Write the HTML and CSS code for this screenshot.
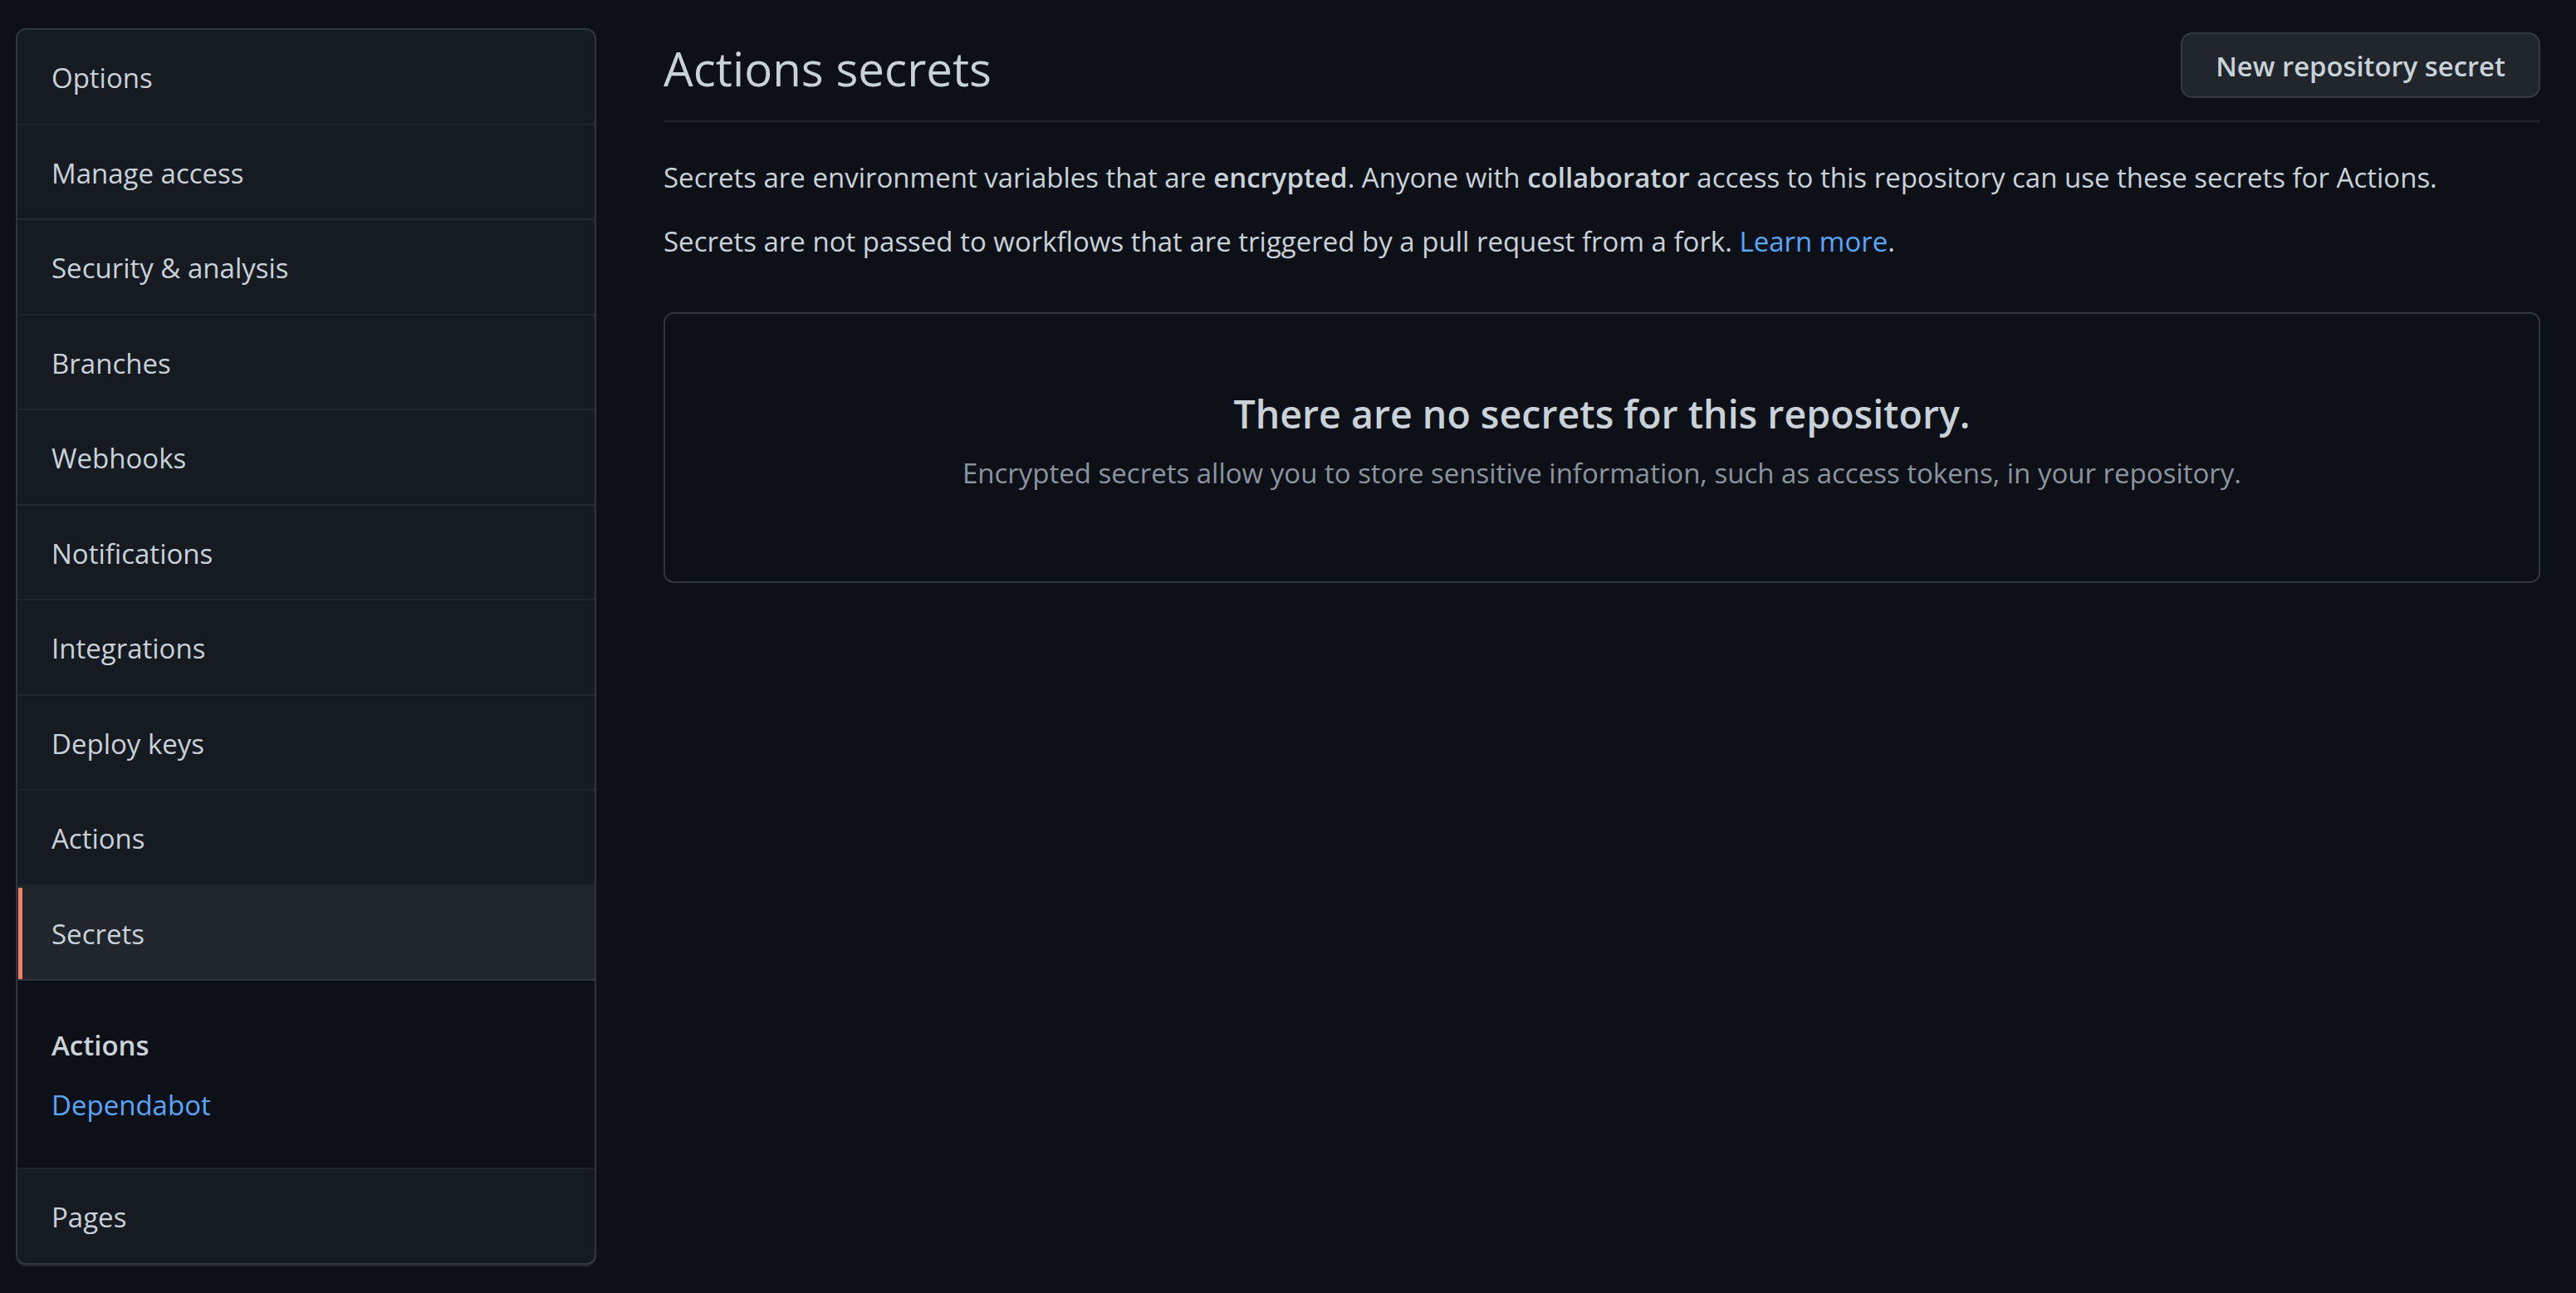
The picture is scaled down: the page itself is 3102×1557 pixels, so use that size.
FILE: index.html
```html
<!DOCTYPE html>
<html lang="en">
<head>
<meta charset="utf-8">
<title>Actions secrets</title>
<link rel="stylesheet" href="styles.css">
</head>
<body>
<div class="layout">
  <nav class="menu">
    <a class="menu-item" href="#">Options</a>
    <a class="menu-item" href="#">Manage access</a>
    <a class="menu-item" href="#">Security &amp; analysis</a>
    <a class="menu-item" href="#">Branches</a>
    <a class="menu-item" href="#">Webhooks</a>
    <a class="menu-item" href="#">Notifications</a>
    <a class="menu-item" href="#">Integrations</a>
    <a class="menu-item" href="#">Deploy keys</a>
    <a class="menu-item" href="#">Actions</a>
    <a class="menu-item selected" href="#">Secrets</a>
    <div class="menu-sub">
      <div class="menu-heading">Actions</div>
      <a class="menu-link" href="#">Dependabot</a>
    </div>
    <a class="menu-item" href="#">Pages</a>
  </nav>
  <main class="main">
    <div class="subhead">
      <h2 class="subhead-heading">Actions secrets</h2>
      <button class="btn" type="button">New repository secret</button>
    </div>
    <p class="intro intro-first">Secrets are environment variables that are <strong>encrypted</strong>. Anyone with <strong>collaborator</strong> access to this repository can use these secrets for Actions.</p>
    <p class="intro intro-second">Secrets are not passed to workflows that are triggered by a pull request from a fork. <a class="link" href="#">Learn more</a>.</p>
    <div class="blankslate">
      <h3 class="blankslate-title">There are no secrets for this repository.</h3>
      <p class="blankslate-text">Encrypted secrets allow you to store sensitive information, such as access tokens, in your repository.</p>
    </div>
  </main>
</div>
</body>
</html>
```
FILE: styles.css
```css
* { box-sizing: border-box; }
html, body {
  margin: 0;
  background: #0d1117;
}
body {
  font-family: "Open Sans", "Noto Sans", sans-serif;
  font-size: 33px;
  color: #c9d1d9;
  padding: 34px 43px 0 19px;
  min-height: 1557px;
}
.layout {
  display: grid;
  grid-template-columns: 699px 1fr;
  column-gap: 81px;
  align-items: start;
}
/* sidebar */
.menu {
  display: flex;
  flex-direction: column;
  background: #161b22;
  border: 2px solid #30363d;
  border-radius: 12px;
  overflow: hidden;
  box-shadow: 0 2px 0 #21262d;
}
.menu-item {
  position: relative;
  display: block;
  color: #c9d1d9;
  text-decoration: none;
  line-height: 48px;
  padding: 34px 20px 30.5px 41px;
  border-top: 2px solid #21262d;
}
.menu-item:first-child { border-top: 0; }
.menu-item.selected {
  background: #21262d;
}
.menu-item.selected::before {
  content: "";
  position: absolute;
  left: 1px;
  top: 2px;
  bottom: 0;
  width: 5px;
  background: #f78166;
}
.menu-sub {
  background: #0d1117;
  border-top: 2px solid #30363d;
  padding: 54px 20px 51px 41px;
  display: flex;
  flex-direction: column;
  gap: 24px;
}
.menu-heading {
  font-weight: 600;
  line-height: 48px;
  color: #c9d1d9;
}
.menu-link {
  line-height: 48px;
  color: #58a6ff;
  text-decoration: none;
}
/* main */
.subhead {
  display: flex;
  justify-content: space-between;
  align-items: flex-start;
  padding-bottom: 23px;
  border-bottom: 2px solid #21262d;
}
.subhead-heading {
  margin: 10px 0 0 0;
  font-size: 56.5px;
  font-weight: 400;
  line-height: 78px;
  color: #c9d1d9;
}
.btn {
  margin-top: 5px;
  height: 79px;
  padding: 4px 40px 0;
  font-family: inherit;
  font-size: 32.8px;
  font-weight: 600;
  color: #c9d1d9;
  background: #21262d;
  border: 2px solid #363b42;
  border-radius: 14px;
  line-height: 1;
}
.intro {
  margin: 0;
  line-height: 49.5px;
}
.intro strong { font-weight: 600; }
.intro-first { margin-top: 42px; }
.intro-second { margin-top: 27px; }
.link { color: #58a6ff; text-decoration: none; }
.blankslate {
  margin-top: 61px;
  border: 2px solid #30363d;
  border-radius: 12px;
  padding: 88px 32px 105px;
  text-align: center;
}
.blankslate-title {
  margin: 0;
  font-size: 46.5px;
  font-weight: 600;
  line-height: 65px;
  color: #c9d1d9;
}
.blankslate-text {
  margin: 14px 0 0 0;
  line-height: 49.5px;
  color: #8b949e;
}
```
